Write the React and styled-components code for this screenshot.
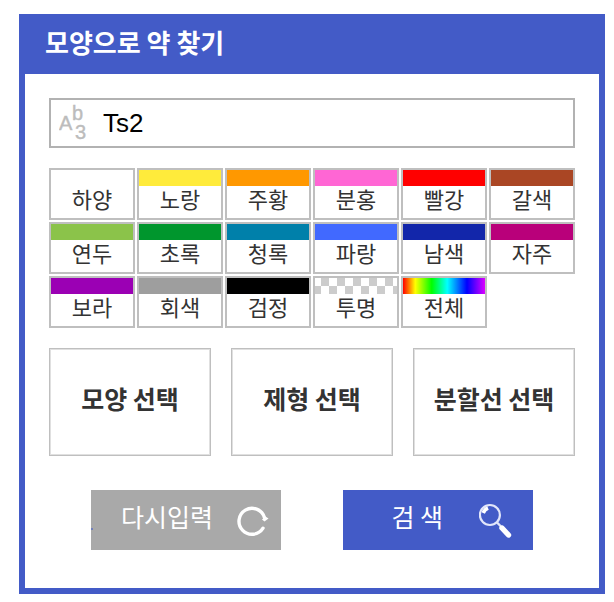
import React, { useState } from "react";
import styled, { createGlobalStyle } from "styled-components";

const GlobalStyle = createGlobalStyle`
  *, *::before, *::after { box-sizing: border-box; }
  body {
    margin: 0;
    background: #fff;
    color: #333;
    font-family: "Noto Sans CJK KR", sans-serif;
  }
  button, input { font-family: inherit; border-radius: 0; }
`;

const Page = styled.main`
  padding: 14px 9px 8px 19px;
`;

const Panel = styled.form`
  border: 6px solid #435bc7;
  border-top: 0;
  background: #fff;
`;

const Header = styled.header`
  height: 60px;
  padding: 0 20px;
  background: #435bc7;
`;

const Title = styled.h1`
  margin: 0;
  color: #fff;
  font-size: 26px;
  font-weight: 700;
  line-height: 56px;
`;

const Body = styled.div`
  display: flex;
  flex-direction: column;
  gap: 20px;
  padding: 24px 24px 38px;
`;

const SearchField = styled.label`
  display: flex;
  align-items: center;
  height: 50px;
  padding-left: 8px;
  border: 2px solid #b2b2b2;
`;

const FieldInput = styled.input`
  flex: 1;
  min-width: 0;
  height: 100%;
  margin-left: 14px;
  padding: 0;
  border: 0;
  outline: 0;
  background: transparent;
  color: #000;
  font-family: "Liberation Sans", Arial, sans-serif;
  font-size: 26px;
`;

const ColorGrid = styled.div`
  display: grid;
  grid-template-columns: repeat(6, 1fr);
  gap: 2px;
`;

const ColorButton = styled.button`
  display: flex;
  flex-direction: column;
  justify-content: flex-start;
  height: 52px;
  padding: 0;
  border: 2px solid #bfbfbf;
  background: #fff;
  color: #333;
  font-size: 22px;
  line-height: 24px;
  text-align: center;
  cursor: pointer;
`;

const Swatch = styled.span`
  align-self: stretch;
  height: 16px;
  background: ${(p) => p.$fill};
`;

const ColorName = styled.span`
  align-self: stretch;
`;

const OptionRow = styled.div`
  display: grid;
  grid-template-columns: repeat(3, 1fr);
  gap: 20px;
`;

const OptionButton = styled.button`
  height: 108px;
  padding: 0 0 8px;
  border: 1px solid #bfbfbf;
  box-shadow: inset 0 0 0 1px #e0e0e0;
  background: #fff;
  color: #333;
  font-size: 25px;
  font-weight: 700;
  cursor: pointer;
`;

const Actions = styled.div`
  display: flex;
  justify-content: center;
  gap: 62px;
  padding-top: 14px;
`;

const ActionButton = styled.button`
  display: flex;
  align-items: center;
  justify-content: flex-end;
  gap: ${(p) => (p.$primary ? 36 : 24)}px;
  width: 190px;
  height: 60px;
  padding: 0 ${(p) => (p.$primary ? 20 : 12)}px 0 0;
  border: 0;
  background: ${(p) =>
    p.$primary
      ? "#435bc7"
      : "linear-gradient(#7180bb, #7180bb) 0 38px / 2px 2px no-repeat #a9a9a9"};
  color: #fff;
  font-size: 25px;
  line-height: 52px;
  cursor: pointer;
`;

const ActionText = styled.span`
  padding-bottom: 8px;
`;

const CHECKER =
  "conic-gradient(#ccc 25%, #fff 0 50%, #ccc 0 75%, #fff 0) -2px 0 / 16px 16px";
const RAINBOW =
  "linear-gradient(90deg, #f00 0%, #ff0 15%, #0f0 35%, #0ff 54%, #00f 78%, #d0f 100%)";

const COLORS = [
  ["하양", "#fff"],
  ["노랑", "#ffeb3b"],
  ["주황", "#ff9800"],
  ["분홍", "#ff66d4"],
  ["빨강", "#f00"],
  ["갈색", "#aa4624"],
  ["연두", "#8bc34a"],
  ["초록", "#00962d"],
  ["청록", "#0080aa"],
  ["파랑", "#4169ff"],
  ["남색", "#1226aa"],
  ["자주", "#b9007a"],
  ["보라", "#9b00b4"],
  ["회색", "#9e9e9e"],
  ["검정", "#000"],
  ["투명", CHECKER],
  ["전체", RAINBOW],
];

const OPTIONS = ["모양 선택", "제형 선택", "분할선 선택"];

function CharactersIcon() {
  return (
    <svg
      width="30"
      height="46"
      viewBox="0 0 30 46"
      fill="#bcbcbc"
      stroke="#bcbcbc"
      strokeWidth="0.4"
      fontFamily="Liberation Sans, Arial, sans-serif"
      fontSize="20"
      aria-hidden="true"
    >
      <text x="0" y="30">A</text>
      <text x="13" y="20">b</text>
      <text x="16" y="39">3</text>
    </svg>
  );
}

function ResetIcon() {
  return (
    <svg width="32" height="32" viewBox="0 0 32 32" fill="none" aria-hidden="true">
      <path
        d="M27.4 13.4 A13 13 0 1 0 26 24.2"
        stroke="#fff"
        strokeWidth="3.4"
        strokeLinecap="round"
      />
      <path d="M25 15.5 L28.5 12.5 L31.5 14.5 L27.5 17.5 Z" fill="#fff" />
    </svg>
  );
}

function SearchIcon() {
  return (
    <svg width="34" height="36" viewBox="0 0 34 36" fill="none" aria-hidden="true">
      <circle cx="10.9" cy="13" r="10" stroke="#e2e6fa" strokeWidth="2.2" />
      <path d="M4.2 11 Q5.5 7.5 9 6" stroke="#fff" strokeWidth="3.6" />
      <path d="M18 20.5 L22 24.5" stroke="#e2e6fa" strokeWidth="2.4" />
      <path
        d="M23 26 L29.5 33"
        stroke="#fff"
        strokeWidth="5.4"
        strokeLinecap="round"
      />
    </svg>
  );
}

export default function App() {
  const [mark, setMark] = useState("Ts2");
  return (
    <>
      <GlobalStyle />
      <Page>
        <Panel onSubmit={(e) => e.preventDefault()}>
          <Header>
            <Title>모양으로 약 찾기</Title>
          </Header>
          <Body>
            <SearchField>
              <CharactersIcon />
              <FieldInput
                type="text"
                aria-label="식별문자"
                value={mark}
                onChange={(e) => setMark(e.target.value)}
              />
            </SearchField>
            <ColorGrid>
              {COLORS.map(([name, fill]) => (
                <ColorButton type="button" key={name}>
                  <Swatch $fill={fill} />
                  <ColorName>{name}</ColorName>
                </ColorButton>
              ))}
            </ColorGrid>
            <OptionRow>
              {OPTIONS.map((label) => (
                <OptionButton type="button" key={label}>
                  {label}
                </OptionButton>
              ))}
            </OptionRow>
            <Actions>
              <ActionButton type="button" onClick={() => setMark("")}>
                <ActionText>다시입력</ActionText>
                <ResetIcon />
              </ActionButton>
              <ActionButton type="submit" $primary>
                <ActionText>검 색</ActionText>
                <SearchIcon />
              </ActionButton>
            </Actions>
          </Body>
        </Panel>
      </Page>
    </>
  );
}
